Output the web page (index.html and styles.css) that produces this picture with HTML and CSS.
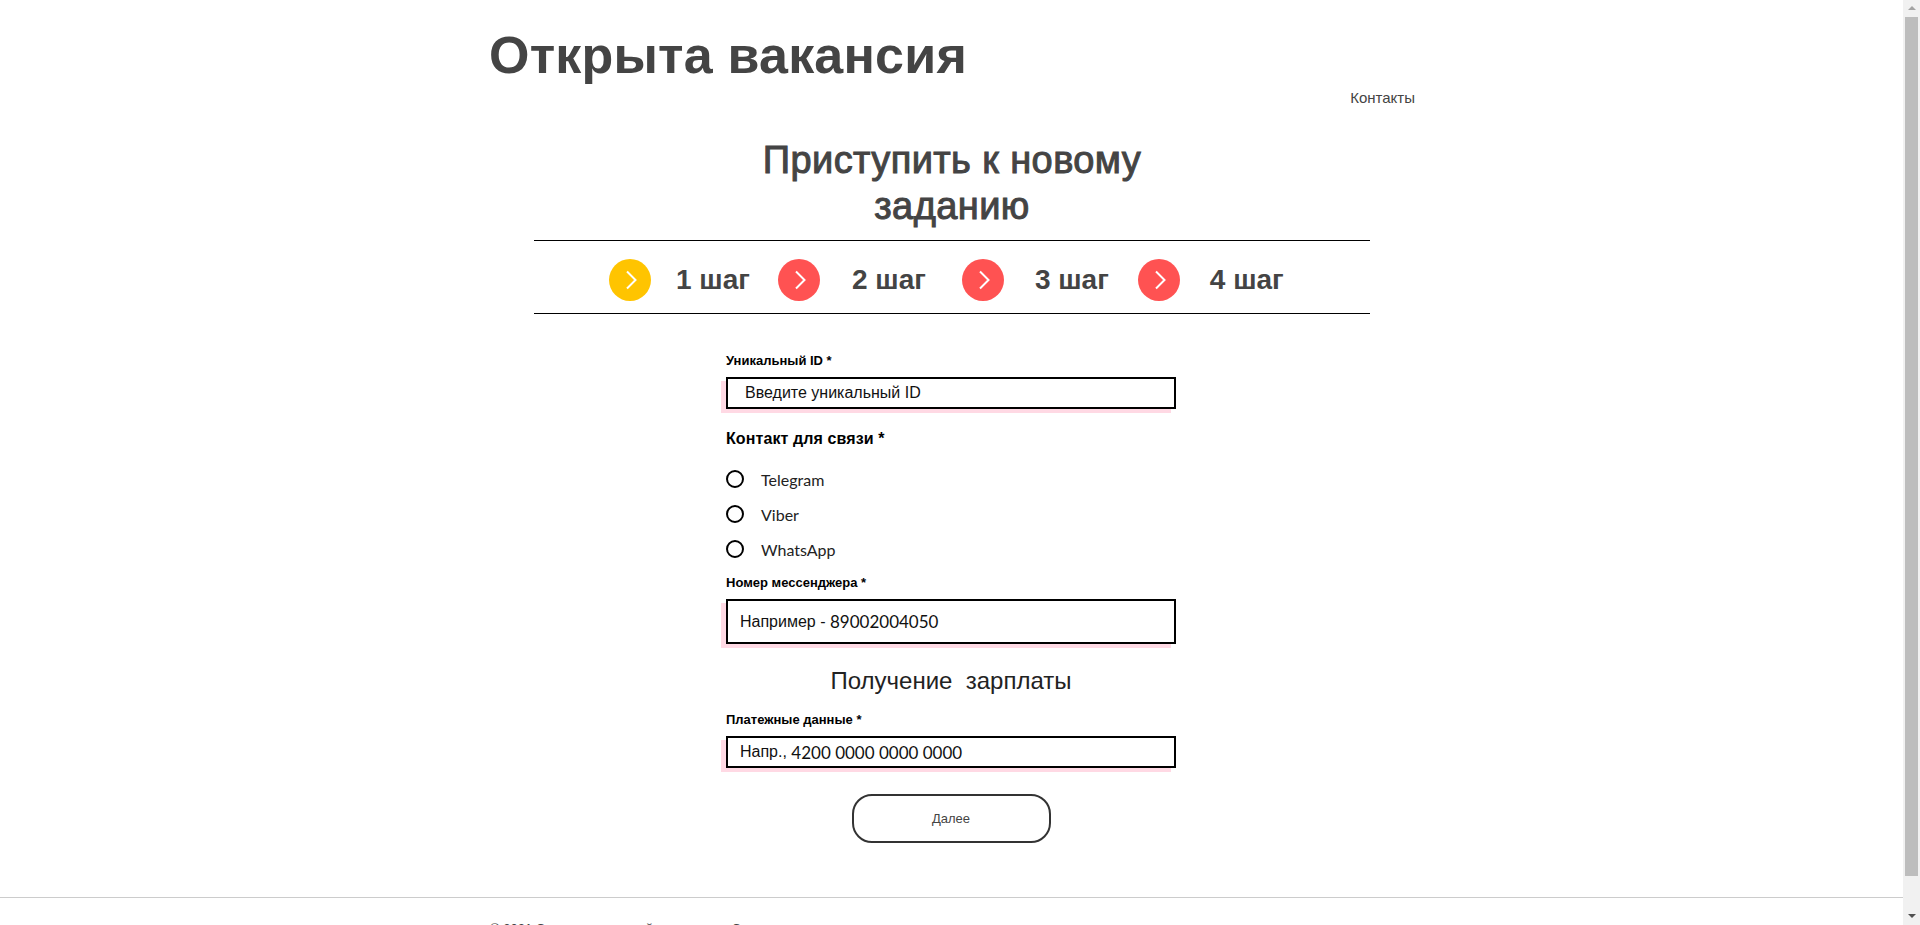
FILE: index.html
```html
<!DOCTYPE html>
<html lang="ru">
  <head>
    <meta charset="UTF-8" />
    <meta name="viewport" content="width=device-width, initial-scale=1.0" />
    <title>Открыта вакансия</title>
    <link rel="stylesheet" href="styles.css">
  </head>
  <body>
    <header class="header">
      <h1 class="site-title">Открыта вакансия</h1>
      <nav class="links"><a href="#">Контакты</a></nav>
    </header>

    <main class="container">
      <h2 class="page-title">Приступить к новому<br />заданию</h2>

      <div class="steps">
        <div class="step">
          <span class="circle active">
            <svg viewBox="0 0 42 42" width="42" height="42"><path d="M18 12.5 L26.5 21 L18 29.5" /></svg>
          </span>
          <span class="step-name">1 шаг</span>
        </div>
        <div class="step">
          <span class="circle">
            <svg viewBox="0 0 42 42" width="42" height="42"><path d="M18 12.5 L26.5 21 L18 29.5" /></svg>
          </span>
          <span class="step-name">2 шаг</span>
        </div>
        <div class="step">
          <span class="circle">
            <svg viewBox="0 0 42 42" width="42" height="42"><path d="M18 12.5 L26.5 21 L18 29.5" /></svg>
          </span>
          <span class="step-name">3 шаг</span>
        </div>
        <div class="step">
          <span class="circle">
            <svg viewBox="0 0 42 42" width="42" height="42"><path d="M18 12.5 L26.5 21 L18 29.5" /></svg>
          </span>
          <span class="step-name">4 шаг</span>
        </div>
      </div>

      <form class="job-form">
        <p class="field-label">Уникальный ID *</p>
        <div class="field field-short field-id" role="textbox">Введите уникальный ID</div>

        <p class="group-label">Контакт для связи *</p>
        <div class="radios">
          <label class="radio"><input type="radio" name="contact" /><span>Telegram</span></label>
          <label class="radio"><input type="radio" name="contact" /><span>Viber</span></label>
          <label class="radio"><input type="radio" name="contact" /><span>WhatsApp</span></label>
        </div>

        <p class="field-label">Номер мессенджера *</p>
        <div class="field field-tall" role="textbox">Например - <span class="digits">89002004050</span></div>

        <h3 class="section-title">Получение&nbsp; зарплаты</h3>

        <p class="field-label">Платежные данные *</p>
        <div class="field field-short" role="textbox">Напр., <span class="digits">4200 0000 0000 0000</span></div>

        <button class="next" type="button">Далее</button>
      </form>
    </main>

    <footer class="footer">
      <p>© 2021 Открытая вакансий — сервисы. Создано</p>
    </footer>

    <!-- the window's scrollbar, lies over the page -->
    <div class="scrollbar">
      <span class="arrow arrow-up"></span>
      <span class="thumb"></span>
      <span class="arrow arrow-down"></span>
    </div>
  </body>
</html>
```

FILE: styles.css
```css
* {
  box-sizing: border-box;
}
html {
  overflow: hidden;
}
body {
  margin: 0;
  font-family: "Liberation Sans", Arial, sans-serif;
  color: #444;
  background-color: white;
}
.header {
  width: 980px;
  margin-left: 461px;
  padding-top: 25px;
}
.site-title {
  margin: 0 0 0 28px;
  font-size: 52px;
  line-height: 60px;
  font-weight: bold;
  letter-spacing: 0.2px;
}
.links {
  display: flex;
  justify-content: flex-end;
  padding-right: 26px;
  margin-top: 3px;
  font-size: 15px;
  line-height: 20px;
}
.links a {
  color: #444;
  text-decoration: none;
}
.container {
  width: 836px;
  margin-left: 534px;
}
.page-title {
  margin: 29px 0 0;
  padding-bottom: 11px;
  text-align: center;
  font-size: 38px;
  line-height: 46px;
  font-weight: normal;
  letter-spacing: 0.4px;
  -webkit-text-stroke: 1px #444;
}
.steps {
  display: flex;
  align-items: center;
  height: 74px;
  padding-top: 5px;
  padding-left: 75px;
  border-top: 1px solid black;
  border-bottom: 1px solid black;
}
.step {
  display: flex;
  align-items: center;
  column-gap: 32px;
  margin-right: 36px;
}
.step:nth-child(1) {
  column-gap: 25px;
  margin-right: 28px;
}
.step:nth-child(3) {
  column-gap: 31px;
  margin-right: 29px;
}
.step:nth-child(4) {
  column-gap: 30px;
}
.circle {
  width: 42px;
  height: 42px;
  border-radius: 50%;
  background-color: #ff5252;
}
.circle.active {
  background-color: #ffc400;
}
.circle svg {
  display: block;
  fill: none;
  stroke: white;
  stroke-width: 2;
}
.step-name {
  font-size: 28px;
  font-weight: bold;
}
.job-form {
  display: flex;
  flex-direction: column;
  width: 450px;
  margin-left: 192px;
  padding-top: 39px;
}
.field-label {
  margin: 0;
  font-size: 13px;
  line-height: 16px;
  font-weight: bold;
  color: black;
}
.group-label {
  margin: 20px 0 0;
  font-size: 16px;
  line-height: 20px;
  font-weight: bold;
  letter-spacing: 0.1px;
  color: black;
}
.field {
  display: flex;
  align-items: center;
  white-space: pre;
  margin-top: 8px;
  padding: 0 12px;
  border: 2px solid black;
  background-color: white;
  box-shadow: -5px 4px 0 #ffd9e4;
  font-size: 16px;
  color: #111;
}
.digits {
  font-family: "Lato", "Liberation Sans", sans-serif;
  font-size: 17px;
}
.field-short {
  height: 32px;
}
.field-id {
  padding-left: 17px;
}
.field-tall {
  height: 45px;
}
.radios {
  display: flex;
  flex-direction: column;
  row-gap: 17px;
  margin-top: 21px;
  margin-bottom: 17px;
}
.radio {
  display: flex;
  align-items: center;
  column-gap: 17px;
  height: 18px;
  font-family: "Lato", "Liberation Sans", sans-serif;
  font-size: 16px;
  color: #222;
}
.radio input {
  appearance: none;
  width: 18px;
  height: 18px;
  margin: 0;
  border: 2px solid black;
  border-radius: 50%;
}
.section-title {
  margin: 21px 0 15px;
  text-align: center;
  font-size: 24px;
  line-height: 32px;
  font-weight: normal;
  color: #222;
}
.next {
  align-self: center;
  width: 199px;
  height: 49px;
  margin-top: 26px;
  border: 2px solid #333;
  border-radius: 20px;
  background-color: white;
  font-family: "Liberation Sans", Arial, sans-serif;
  font-size: 13px;
  color: #444;
}
.footer {
  margin-top: 54px;
  padding: 23px 0 20px 490px;
  border-top: 1px solid #ccc;
}
.footer p {
  margin: 0;
  font-size: 13px;
  line-height: 16px;
}
.scrollbar {
  position: fixed;
  top: 0;
  right: 0;
  display: flex;
  flex-direction: column;
  align-items: center;
  width: 17px;
  height: 100vh;
  background-color: #f1f1f1;
}
.arrow {
  width: 0;
  height: 0;
  border-left: 4px solid transparent;
  border-right: 4px solid transparent;
}
.arrow-up {
  margin-top: 6px;
  border-bottom: 4px solid #a3a3a3;
}
.thumb {
  width: 13px;
  height: 859px;
  margin-top: 7px;
  background-color: #bdbdbd;
}
.arrow-down {
  margin-top: auto;
  margin-bottom: 7px;
  border-top: 4px solid #505050;
}
```
